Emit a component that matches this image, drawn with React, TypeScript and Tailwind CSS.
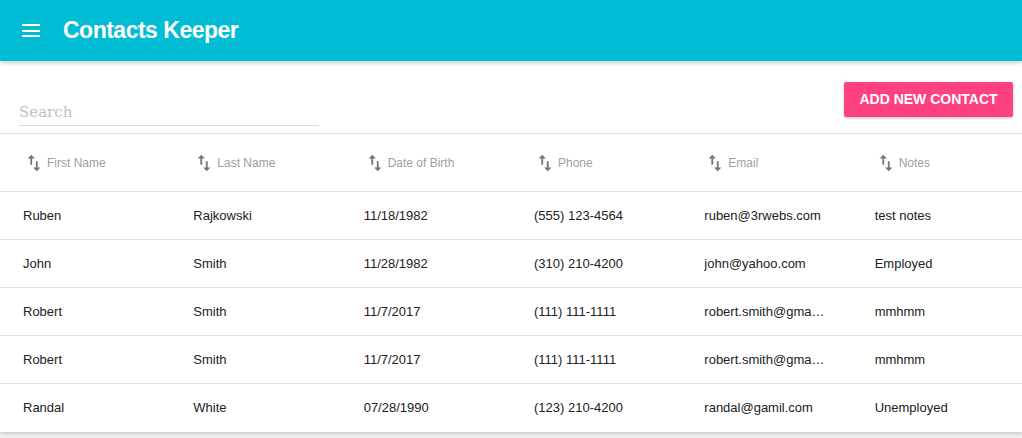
import React, { useState } from 'react';

type Contact = {
  firstName: string;
  lastName: string;
  dob: string;
  phone: string;
  email: string;
  notes: string;
};

const contacts: Contact[] = [
  { firstName: 'Ruben', lastName: 'Rajkowski', dob: '11/18/1982', phone: '(555) 123-4564', email: 'ruben@3rwebs.com', notes: 'test notes' },
  { firstName: 'John', lastName: 'Smith', dob: '11/28/1982', phone: '(310) 210-4200', email: 'john@yahoo.com', notes: 'Employed' },
  { firstName: 'Robert', lastName: 'Smith', dob: '11/7/2017', phone: '(111) 111-1111', email: 'robert.smith@gmail.com', notes: 'mmhmm' },
  { firstName: 'Robert', lastName: 'Smith', dob: '11/7/2017', phone: '(111) 111-1111', email: 'robert.smith@gmail.com', notes: 'mmhmm' },
  { firstName: 'Randal', lastName: 'White', dob: '07/28/1990', phone: '(123) 210-4200', email: 'randal@gamil.com', notes: 'Unemployed' },
];

const columns = ['First Name', 'Last Name', 'Date of Birth', 'Phone', 'Email', 'Notes'];

// material "swap_vert"
function SortIcon() {
  return (
    <svg width="22" height="22" viewBox="0 0 24 24" className="shrink-0 fill-[#757575]">
      <path d="M16 17.01V10h-2v7.01h-3L15 21l4-3.99h-3zM9 3L5 6.99h3V14h2V6.99h3L9 3z" />
    </svg>
  );
}

function App() {
  const [search, setSearch] = useState('');

  const rows = contacts.filter(c =>
    `${c.firstName} ${c.lastName} ${c.email}`.toLowerCase().includes(search.toLowerCase())
  );

  return (
    <div className="min-h-screen bg-[#efefef] font-['Liberation_Sans',Arial,sans-serif]">
      {/* app bar */}
      <header className="relative z-10 h-[61px] bg-[#00bcd4] flex items-center shadow-[0_2px_4px_rgba(0,0,0,0.2)]">
        <button className="ml-[22px] w-[18px] flex flex-col gap-[3.5px]">
          <span className="block h-[2px] w-[18px] bg-white" />
          <span className="block h-[2px] w-[18px] bg-white" />
          <span className="block h-[2px] w-[18px] bg-white" />
        </button>
        <h1 className="ml-[23px] text-white text-[23px] font-bold tracking-[-0.5px]">Contacts Keeper</h1>
      </header>

      <div className="bg-white shadow-[0_1px_4px_rgba(0,0,0,0.2)]">
        {/* toolbar */}
        <div className="h-[72px] flex items-start justify-between pl-[19px] pr-[9px]">
          <input
            value={search}
            onChange={e => setSearch(e.target.value)}
            placeholder="Search"
            className="mt-[36px] w-[300px] h-[29px] border-b border-[#dcdcdc] outline-none text-[16px] text-[#333] placeholder:text-[#c2c2c2] font-['DejaVu_Serif','Liberation_Serif',Georgia,serif] placeholder:text-[15px]"
          />
          <button className="mt-[21px] h-[35px] w-[169px] rounded-[2px] bg-[#ff4081] text-white text-[14px] font-bold shadow-[0_1px_3px_rgba(0,0,0,0.25)]">
            ADD NEW CONTACT
          </button>
        </div>

        {/* table */}
        <div className="border-t border-[#e0e0e0]">
          <div className="grid grid-cols-6 h-[58px] border-b border-[#e0e0e0]">
            {columns.map(col => (
              <div key={col} className="flex items-center pl-[23px] gap-[2px] text-[12px] text-[#9e9e9e]">
                <SortIcon />
                <span>{col}</span>
              </div>
            ))}
          </div>
          {rows.map((c, i) => (
            <div
              key={i}
              className={`grid grid-cols-6 h-[48px] text-[13px] text-[#212121] ${i < rows.length - 1 ? 'border-b border-[#e0e0e0]' : ''}`}
            >
              <div className="flex items-center pl-[23px]">{c.firstName}</div>
              <div className="flex items-center pl-[23px]">{c.lastName}</div>
              <div className="flex items-center pl-[23px]">{c.dob}</div>
              <div className="flex items-center pl-[23px]">{c.phone}</div>
              <div className="flex items-center pl-[23px] pr-[26px] min-w-0">
                <span className="truncate">{c.email}</span>
              </div>
              <div className="flex items-center pl-[23px]">{c.notes}</div>
            </div>
          ))}
        </div>
      </div>
    </div>
  );
}

export default App;
